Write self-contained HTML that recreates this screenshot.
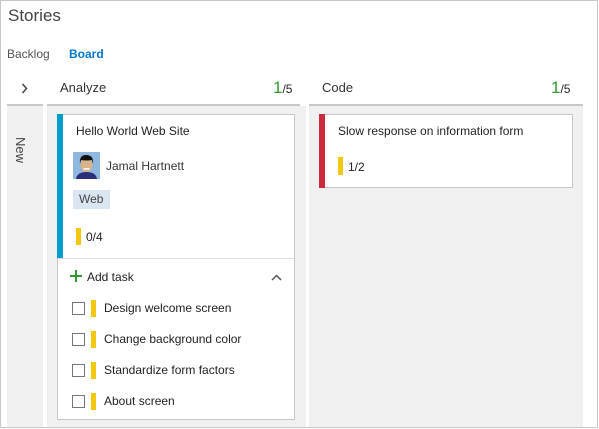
<!DOCTYPE html>
<html><head><style>
*{margin:0;padding:0;box-sizing:border-box}
body{width:599px;height:429px;background:#fff;font-family:"Segoe UI","Liberation Sans",sans-serif;color:#222;position:relative;overflow:hidden}
.a{position:absolute}
.frame{left:0;top:0;width:598px;height:428px;border:1px solid #c8c8c8}
.col{background:#f0f0f0;top:106px;height:321px}
.hl{height:3px;top:104px;background:#c8c8c8}
.card{background:#fff;border:1px solid #c8c8c8}
.t{font-size:12px;white-space:nowrap}
.ybar{width:5px;height:17px;background:#f2c811}
.cb{width:13px;height:13px;border:1px solid #777;background:#fff}
</style></head><body>
<div class="a frame"></div>
<div class="a" style="left:8px;top:6px;font-size:17px;color:#444">Stories</div>
<div class="a t" style="left:7px;top:47px;color:#555">Backlog</div>
<div class="a t" style="left:69px;top:47px;color:#0078d4;font-weight:bold">Board</div>

<svg class="a" style="left:21px;top:83px" width="7" height="11"><path d="M1.5 1 L5.5 5.5 L1.5 10" stroke="#444" stroke-width="1.5" fill="none"/></svg>
<div class="a" style="left:60px;top:80px;font-size:13px;color:#333">Analyze</div>
<div class="a" style="left:273px;top:78px;white-space:nowrap"><span style="font-size:17px;color:#339933">1</span><span style="font-size:12px">/5</span></div>
<div class="a" style="left:322px;top:80px;font-size:13px;color:#333">Code</div>
<div class="a" style="left:551px;top:78px;white-space:nowrap"><span style="font-size:17px;color:#339933">1</span><span style="font-size:12px">/5</span></div>

<div class="a hl" style="left:7px;width:36px"></div>
<div class="a hl" style="left:47px;width:253px"></div>
<div class="a hl" style="left:309px;width:274px"></div>
<div class="a col" style="left:7px;width:36px"></div>
<div class="a col" style="left:47px;width:259px"></div>
<div class="a col" style="left:309px;width:274px"></div>
<div class="a" style="left:16px;top:137px;font-size:13px;color:#444;transform-origin:0 0;transform:rotate(90deg) translate(0,-12px);white-space:nowrap">New</div>

<div class="a card" style="left:57px;top:114px;width:238px;height:306px"></div>
<div class="a" style="left:57px;top:114px;width:6px;height:144px;background:#009ccc"></div>
<div class="a" style="left:58px;top:258px;width:236px;height:1px;background:#ddd"></div>
<div class="a t" style="left:76px;top:124px">Hello World Web Site</div>
<svg class="a" style="left:73px;top:152px" width="27" height="27" viewBox="0 0 27 27"><rect width="27" height="27" fill="#8fb8e0"/><path d="M3 27 Q4 20 13.5 20 Q23 20 24 27Z" fill="#2b2f7a"/><ellipse cx="13.5" cy="13" rx="6" ry="7" fill="#d9b48a"/><path d="M7 12 Q6 3 13 3 Q21 3 20 12 L19 8 Q13 9 8 8Z" fill="#111"/><rect x="10.5" y="16" width="6" height="1.5" fill="#fff"/></svg>
<div class="a t" style="left:106px;top:159px;color:#333">Jamal Hartnett</div>
<div class="a" style="left:73px;top:190px;width:37px;height:19px;background:#d9e6f2;font-size:12px;color:#444;padding:2px 0 0 6px">Web</div>
<div class="a ybar" style="left:76px;top:228px"></div>
<div class="a t" style="left:86px;top:230px">0/4</div>

<svg class="a" style="left:70px;top:270px" width="12" height="12"><path d="M6 0 V12 M0 6 H12" stroke="#339933" stroke-width="2"/></svg>
<div class="a t" style="left:87px;top:270px">Add task</div>
<svg class="a" style="left:271px;top:274px" width="11" height="8"><path d="M1 6 L5.5 1.5 L10 6" stroke="#555" stroke-width="1.5" fill="none"/></svg>

<div class="a cb" style="left:72px;top:302px"></div><div class="a ybar" style="left:91px;top:300px"></div><div class="a t" style="left:104px;top:301px">Design welcome screen</div>
<div class="a cb" style="left:72px;top:333px"></div><div class="a ybar" style="left:91px;top:331px"></div><div class="a t" style="left:104px;top:332px">Change background color</div>
<div class="a cb" style="left:72px;top:364px"></div><div class="a ybar" style="left:91px;top:362px"></div><div class="a t" style="left:104px;top:363px">Standardize form factors</div>
<div class="a cb" style="left:72px;top:395px"></div><div class="a ybar" style="left:91px;top:393px"></div><div class="a t" style="left:104px;top:394px">About screen</div>

<div class="a card" style="left:319px;top:114px;width:254px;height:74px"></div>
<div class="a" style="left:319px;top:114px;width:6px;height:74px;background:#cc293d"></div>
<div class="a t" style="left:338px;top:124px">Slow response on information form</div>
<div class="a ybar" style="left:338px;top:157px;height:18px"></div>
<div class="a t" style="left:348px;top:160px">1/2</div>
</body></html>
